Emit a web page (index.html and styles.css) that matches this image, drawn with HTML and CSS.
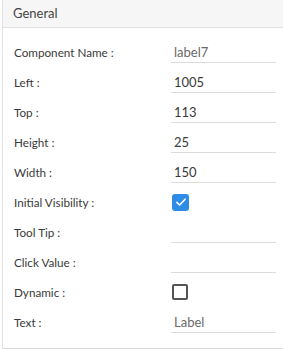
FILE: index.html
```html
<!DOCTYPE html>
<html lang="en">
<head>
    <meta charset="UTF-8">
    <meta name="viewport" content="width=device-width, initial-scale=1.0">
    <title>Properties - General</title>
    <link rel="stylesheet" href="styles.css">
</head>
<body>
    <div class="props-panel">
        <div class="props-header">General</div>

        <div class="props-body">
            <div class="prop-row">
                <label for="compName">Component Name :</label>
                <input type="text" id="compName" class="prop-input muted" value="label7" readonly>
            </div>
            <div class="prop-row">
                <label for="propLeft">Left :</label>
                <input type="text" id="propLeft" class="prop-input" value="1005">
            </div>
            <div class="prop-row">
                <label for="propTop">Top :</label>
                <input type="text" id="propTop" class="prop-input" value="113">
            </div>
            <div class="prop-row">
                <label for="propHeight">Height :</label>
                <input type="text" id="propHeight" class="prop-input" value="25">
            </div>
            <div class="prop-row">
                <label for="propWidth">Width :</label>
                <input type="text" id="propWidth" class="prop-input" value="150">
            </div>
            <div class="prop-row">
                <label>Initial Visibility :</label>
                <span class="check-box checked">
                    <svg viewBox="0 0 16 16" width="12" height="12">
                        <path d="M2.5 8.5 L6.2 12 L13.5 4.2" fill="none" stroke="#fff" stroke-width="2" stroke-linecap="round" stroke-linejoin="round"/>
                    </svg>
                </span>
            </div>
            <div class="prop-row">
                <label for="propTip">Tool Tip :</label>
                <input type="text" id="propTip" class="prop-input" value="">
            </div>
            <div class="prop-row">
                <label for="propClick">Click Value :</label>
                <input type="text" id="propClick" class="prop-input" value="">
            </div>
            <div class="prop-row">
                <label>Dynamic :</label>
                <span class="check-box"></span>
            </div>
            <div class="prop-row">
                <label for="propText">Text :</label>
                <input type="text" id="propText" class="prop-input muted" value="Label">
            </div>
        </div>
    </div>
</body>
</html>
```

FILE: styles.css
```css
* {
    margin: 0;
    padding: 0;
    box-sizing: border-box;
}

body {
    font-family: 'Lato', 'Open Sans', sans-serif;
    background: #fff;
    color: #333;
    padding-left: 2px;
}

.props-panel {
    width: 290px;
    border-left: 1px solid #e3e3e3;
    border-bottom: 1px solid #d9d9d9;
}

.props-header {
    height: 28px;
    line-height: 27px;
    padding-left: 10px;
    background: #f6f6f6;
    border-bottom: 1px solid #e0e0e0;
    font-size: 13px;
    color: #444;
}

.props-body {
    padding: 9px 0 11px 0;
}

.prop-row {
    display: grid;
    grid-template-columns: 157px 105px;
    align-items: center;
    height: 30px;
    padding-left: 11px;
}

.prop-row label {
    font-size: 11.7px;
    color: #3a3a3a;
}

.prop-input {
    width: 105px;
    height: 22px;
    border: none;
    border-bottom: 1px solid #dcdcdc;
    padding: 0 3px;
    font-family: inherit;
    font-size: 13px;
    color: #3a3a3a;
    background: transparent;
    outline: none;
}

.prop-input.muted {
    color: #6a6a6a;
}

.check-box {
    width: 16px;
    height: 16px;
    border: 2px solid #555;
    border-radius: 2px;
    display: flex;
    align-items: center;
    justify-content: center;
    margin-left: 1px;
}

.check-box.checked {
    background: #2f8ce6;
    border-color: #2f8ce6;
    width: 17px;
    height: 17px;
    border-radius: 3px;
}
```
